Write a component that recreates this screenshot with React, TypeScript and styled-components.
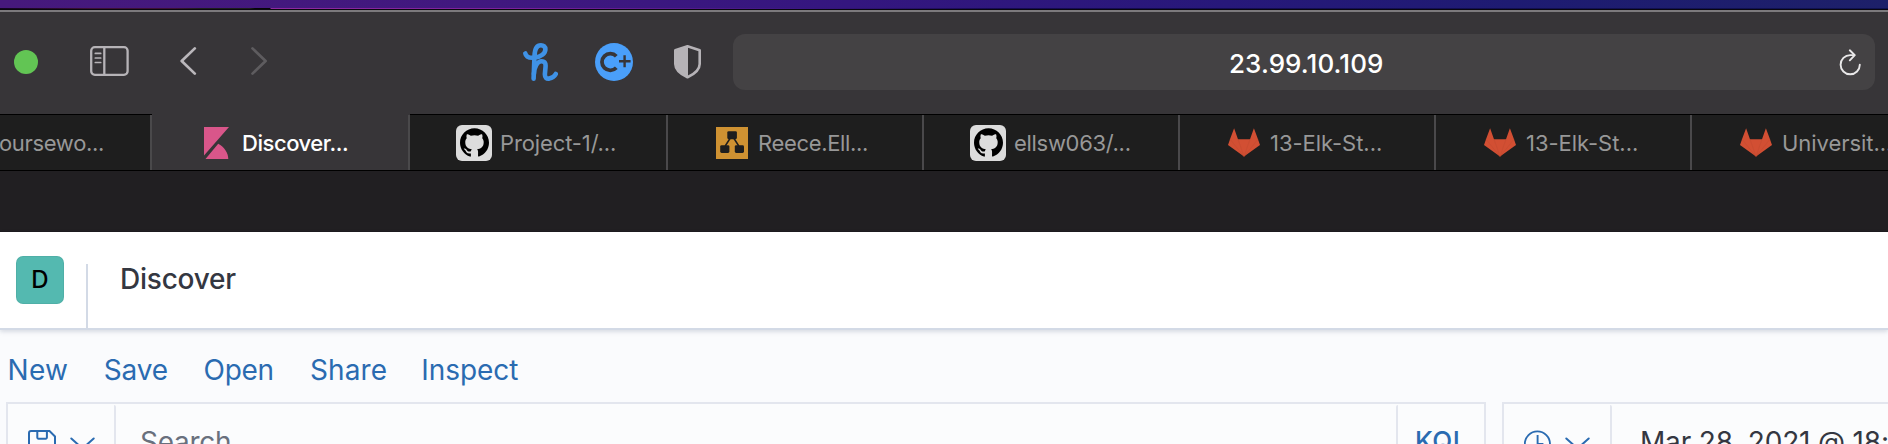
import React from "react";
import styled, { createGlobalStyle } from "styled-components";
import { SiGithub } from "react-icons/si";

const GlobalStyle = createGlobalStyle`
  *, *::before, *::after { box-sizing: border-box; }
  body {
    margin: 0;
    overflow: hidden;
    font-family: Inter, "Liberation Sans", sans-serif;
    background: #fafbfd;
  }
  svg { display: block; flex: none; }
`;

const Screen = styled.div`
  display: flex;
  flex-direction: column;
  width: 1888px;
  height: 444px;
  overflow: hidden;
`;

/* ---------- desktop strip above the window ---------- */

const Desktop = styled.div`
  flex: none;
  height: 10px;
  display: flex;
  flex-direction: column;
  background: linear-gradient(90deg, #46197c 0%, #41187f 25%, #34167f 45%, #27187a 65%, #1e1b72 80%, #1d2069 100%);
`;

const DesktopEdge = styled.div`
  margin-top: 8px;
  height: 1px;
  background: linear-gradient(90deg, #10051f 0, #3c1035 90px, #3c1035 175px, #1d1d1d 200px, #1d1d1d 250px, #050505 255px, #050505 270px, #8e2aa0 271px, #79209c 520px, #3a1682 800px, #150a50 1000px, #0f1250 100%);
`;

const DesktopShadow = styled.div`
  height: 1px;
  background: #09060f;
`;

/* ---------- browser toolbar ---------- */

const Toolbar = styled.header`
  flex: none;
  height: 104px;
  display: flex;
  align-items: flex-start;
  border-top: 2px solid #7c7a7d;
  background: #373538;
`;

const WindowControls = styled.div`
  width: 90px;
  padding: 38px 0 0 14px;
`;

const ZoomLight = styled.div`
  width: 24px;
  height: 24px;
  border-radius: 50%;
  background: #62c554;
`;

const Navigation = styled.nav`
  width: 432px;
  padding-top: 34px;
  display: flex;
  align-items: flex-start;
`;

const NavGlyph = styled.span<{ $before?: number }>`
  margin-left: ${(p) => p.$before ?? 0}px;
`;

const Extensions = styled.div`
  width: 211px;
  padding-top: 29px;
  display: grid;
  grid-template-columns: 73px 79px auto;
`;

const AddressBar = styled.div`
  width: 1142px;
  height: 56px;
  margin-top: 22px;
  padding-right: 11px;
  display: flex;
  align-items: center;
  border-radius: 12px;
  background: #444244;
`;

const Address = styled.span`
  flex: 1;
  padding: 3px 0 0 496px;
  font-size: 26px;
  font-weight: 500;
  line-height: 32px;
  letter-spacing: 0.08px;
  color: #fff;
`;

/* ---------- tabs ---------- */

const TabStrip = styled.div`
  flex: none;
  height: 57px;
  display: flex;
  border-bottom: 1px solid #000;
  background: #1e1e1e;
`;

const Tab = styled.div<{ $width: number; $active?: boolean; $pad: number }>`
  flex: none;
  width: ${(p) => p.$width}px;
  display: flex;
  align-items: center;
  padding-left: ${(p) => p.$pad}px;
  border-top: 1px solid ${(p) => (p.$active ? "#373538" : "#000")};
  background: ${(p) => (p.$active ? "#373538" : "#1e1e1e")};
  box-shadow: inset -2px 0 0 #4a494b;
`;

const TabIcon = styled.span`
  width: 36px;
  height: 36px;
  display: flex;
  align-items: center;
  justify-content: center;
`;

const GithubTile = styled(TabIcon)`
  border-radius: 6px;
  background: #dcdcdc;
  color: #000;
`;

const TabTitle = styled.span<{ $active?: boolean; $gap: number; $tracking: number }>`
  margin-left: ${(p) => p.$gap}px;
  padding-top: 1px;
  font-size: 22px;
  line-height: 28px;
  white-space: nowrap;
  font-weight: ${(p) => (p.$active ? 500 : 400)};
  letter-spacing: ${(p) => p.$tracking}px;
  color: ${(p) => (p.$active ? "#fff" : "#989898")};
`;

const EmptyBar = styled.div`
  flex: none;
  height: 61px;
  background: #211f22;
  border-bottom: 1px solid #1b191c;
`;

/* ---------- page ---------- */

const PageHeader = styled.div`
  flex: none;
  height: 98px;
  display: flex;
  align-items: flex-start;
  background: #fff;
  border-bottom: 2px solid #d3dae6;
  box-shadow: 0 2px 4px rgba(120, 130, 155, 0.25);
`;

const SpaceAvatar = styled.div`
  width: 48px;
  height: 48px;
  margin: 24px 22px 0 16px;
  border-radius: 7px;
  background: #54b9b0;
  box-shadow: inset 0 0 0 1px rgba(0, 0, 0, 0.05);
  font-size: 24px;
  font-weight: 500;
  line-height: 47px;
  text-align: center;
  color: #000;
`;

const Breadcrumb = styled.div`
  height: 64px;
  margin-top: 32px;
  padding-left: 32px;
  border-left: 2px solid #d3dae6;
  font-size: 28px;
  font-weight: 500;
  line-height: 30px;
  letter-spacing: -0.23px;
  color: #343741;
`;

const MenuBar = styled.nav`
  flex: none;
  height: 72px;
  padding: 23px 0 0 7.6px;
  display: grid;
  grid-template-columns: 96.1px 99.8px 106.5px 111.3px auto;
  color: #2a6bb1;
`;

const MenuLink = styled.a<{ $tracking?: number }>`
  font-size: 28px;
  line-height: 34px;
  letter-spacing: ${(p) => p.$tracking ?? 0}px;
`;

const QueryRow = styled.div`
  flex: none;
  height: 80px;
  padding-left: 6px;
  display: flex;
  gap: 16px;
`;

const Field = styled.div<{ $width: number }>`
  flex: none;
  width: ${(p) => p.$width}px;
  display: flex;
  border: 2px solid #e3e6ee;
  background: #fbfcfd;
`;

const FieldButton = styled.div<{ $width: number; $pad: number }>`
  width: ${(p) => p.$width}px;
  margin-top: 1px;
  padding: 25px 0 0 ${(p) => p.$pad}px;
  display: flex;
  gap: 14px;
  border-right: 2px solid #e3e6ee;
  border-top-right-radius: 2px;
`;

const FieldText = styled.div<{ $color: string; $pad: number; $tracking: number }>`
  flex: 1;
  padding-left: ${(p) => p.$pad}px;
  font-size: 28px;
  line-height: 76px;
  letter-spacing: ${(p) => p.$tracking}px;
  white-space: nowrap;
  color: ${(p) => p.$color};
`;

const LanguageToggle = styled.div`
  width: 88px;
  margin-top: 1px;
  padding-left: 17px;
  border-left: 2px solid #e3e6ee;
  border-top-left-radius: 2px;
  font-size: 26px;
  font-weight: 500;
  line-height: 71px;
  letter-spacing: 0.4px;
  color: #2a6bb1;
`;

/* ---------- drawings ---------- */

const SidebarIcon = () => (
  <svg width="39" height="30" viewBox="0 0 39 30" fill="none" stroke="#b6b3b7">
    <rect x="1.2" y="1.2" width="36.4" height="27.6" rx="3.6" strokeWidth="2.3" />
    <path d="M14.3 1v28" strokeWidth="2.3" />
    <path d="M5.3 7.4h5.4M5.3 12h5.4M5.3 16.5h5.4" strokeWidth="1.7" strokeLinecap="round" />
  </svg>
);

const Arrow = ({ forward }: { forward?: boolean }) => (
  <svg width="17" height="30" viewBox="0 0 17 30" fill="none" stroke={forward ? "#5e5c5f" : "#bab7bb"} strokeWidth="2.7" strokeLinecap="round" strokeLinejoin="round">
    <path d={forward ? "M1.5 2.4 14.6 15 1.5 27.6" : "M14.8 2.4 1.7 15l13.1 12.6"} />
  </svg>
);

const HoneyIcon = () => (
  <svg width="36" height="42" viewBox="0 0 36 42" fill="none" stroke="#3f92e6" strokeWidth="4.6" strokeLinecap="round" strokeLinejoin="round">
    <path d="M3.3 12.4C4 16 7.4 17.2 12.6 16.7 19 16 23.4 12.5 23.4 8.3 23.4 5.6 21.5 4.2 18.9 4.2 14.8 4.2 12.7 8.5 12.5 15L11.6 37.6" />
    <path d="M11.9 33C12.3 25.5 15.4 20.3 19.6 20.3 23 20.3 23.9 22.7 23.5 26.2L22.9 33C22.7 36.5 24.5 38 27.2 37.6 30.5 37 32.5 35.5 33.8 33" />
  </svg>
);

const CouponIcon = () => (
  <svg width="38" height="42" viewBox="0 0 38 42" fill="none">
    <circle cx="19" cy="21" r="19" fill="#4a9ffa" />
    <g stroke="#373538">
      <path d="M21.3 15.3A8.3 8.3 0 1 0 21.3 26.7" strokeWidth="3.8" />
      <path d="M29.6 14.2v12M24 20.2h11.6" strokeWidth="2.4" />
    </g>
  </svg>
);

const ShieldIcon = () => (
  <svg width="28" height="42" viewBox="0 0 28 42">
    <path d="M13.5 5.3 25.7 9.3V23c0 6-6 10.4-12.2 13.3C7.3 33.4 1.3 29 1.3 23V9.3Z" fill="none" stroke="#b6b3b7" strokeWidth="2.6" strokeLinejoin="round" />
    <path d="M14 5.3 1.5 9.3V23c0 6 6 10.4 12.5 13.3Z" fill="#b6b3b7" />
  </svg>
);

const ReloadIcon = () => (
  <svg width="26" height="30" viewBox="0 0 26 30" fill="none" stroke="#e9e8e9" strokeWidth="1.9" strokeLinecap="round" strokeLinejoin="round">
    <path d="M21.8 17.7A9.6 9.6 0 1 1 12.2 8.1H16.2" />
    <path d="M11.8 3.3 16.8 8.2 11.8 13.3" />
  </svg>
);

const KibanaIcon = () => (
  <svg width="25" height="32" viewBox="0 0 25 32" fill="#d9568a">
    <path d="M0 0h25L0 28.5ZM1.5 32 14.2 16.8c6 3.3 10 8.7 10.1 15.2Z" />
  </svg>
);

const DiagramIcon = () => (
  <svg width="32" height="32" viewBox="0 0 32 32">
    <path d="M0 0h32v32H0z" fill="#cf9232" />
    <g fill="#1e1e1e">
      <rect x="11.3" y="4.2" width="9.6" height="8" rx="1.4" />
      <rect x="4.2" y="18.2" width="9.2" height="7.8" rx="1.4" />
      <rect x="18.8" y="18.2" width="9.2" height="7.8" rx="1.4" />
      <path d="m14 11.5-4.8 7.5M18 11.5l4.8 7.5" stroke="#1e1e1e" strokeWidth="1.5" />
    </g>
  </svg>
);

const GitlabIcon = () => (
  <svg width="32" height="29" viewBox="0 0 32 29">
    <path d="M6.1.3 10 11.2h12L25.9.3 30 11.2l2 5.8L16 28.6 0 17l2-5.8Z" fill="#d24f33" />
    <path d="M10 11.2 16 28.6 22 11.2M2 11.2 16 28.6 30 11.2" fill="none" stroke="#bd482f" strokeWidth=".4" />
  </svg>
);

const SaveIcon = () => (
  <svg width="28" height="28" viewBox="0 0 28 28" fill="none" stroke="#2a6bb1" strokeWidth="2">
    <path d="M3 1h18.5L27 6.5V25a2 2 0 0 1-2 2H3a2 2 0 0 1-2-2V3a2 2 0 0 1 2-2Z" />
    <path d="M9.3 1v6.5a1.2 1.2 0 0 0 1.2 1.2h7.2a1.2 1.2 0 0 0 1.2-1.2V1" />
  </svg>
);

const ClockIcon = () => (
  <svg width="27" height="28" viewBox="0 0 27 28" fill="none" stroke="#2a6bb1" strokeWidth="1.9">
    <circle cx="13.4" cy="14" r="12.6" />
    <path d="M13.6 5v9h5.8" />
  </svg>
);

const ChevronIcon = () => (
  <svg width="25" height="28" viewBox="0 0 25 28" fill="none" stroke="#2a6bb1" strokeWidth="2" strokeLinecap="round" strokeLinejoin="round">
    <path d="M1.3 8.5 12.5 18.5 23.7 8.5" />
  </svg>
);

type TabKind = "kibana" | "github" | "diagram" | "gitlab";

const Favicon = ({ kind }: { kind: TabKind }) => {
  if (kind === "github") return <GithubTile><SiGithub size={29} /></GithubTile>;
  return (
    <TabIcon>
      {kind === "kibana" ? <KibanaIcon /> : kind === "diagram" ? <DiagramIcon /> : <GitlabIcon />}
    </TabIcon>
  );
};

type TabData = { kind?: TabKind; title: string; width: number; pad: number; gap: number; tracking: number; active?: boolean };

const tabs: TabData[] = [
  { title: "oursewo...", width: 152, pad: 0, gap: -1, tracking: -0.33 },
  { kind: "kibana", title: "Discover...", width: 258, pad: 46, gap: 8, tracking: -0.45, active: true },
  { kind: "github", title: "Project-1/...", width: 258, pad: 46, gap: 8, tracking: -0.12 },
  { kind: "diagram", title: "Reece.Ell...", width: 256, pad: 46, gap: 8, tracking: -0.34 },
  { kind: "github", title: "ellsw063/...", width: 256, pad: 46, gap: 8, tracking: -0.3 },
  { kind: "gitlab", title: "13-Elk-St...", width: 256, pad: 46, gap: 8, tracking: -0.04 },
  { kind: "gitlab", title: "13-Elk-St...", width: 256, pad: 46, gap: 8, tracking: -0.04 },
  { kind: "gitlab", title: "Universit...", width: 256, pad: 46, gap: 8, tracking: -0.04 },
];

export default function App() {
  return (
    <Screen>
      <GlobalStyle />
      <Desktop>
        <DesktopEdge />
        <DesktopShadow />
      </Desktop>
      <Toolbar>
        <WindowControls><ZoomLight /></WindowControls>
        <Navigation>
          <NavGlyph><SidebarIcon /></NavGlyph>
          <NavGlyph $before={51}><Arrow /></NavGlyph>
          <NavGlyph $before={54}><Arrow forward /></NavGlyph>
        </Navigation>
        <Extensions>
          <HoneyIcon />
          <CouponIcon />
          <ShieldIcon />
        </Extensions>
        <AddressBar>
          <Address>23.99.10.109</Address>
          <ReloadIcon />
        </AddressBar>
      </Toolbar>
      <TabStrip>
        {tabs.map((tab, i) => (
          <Tab key={i} $width={tab.width} $pad={tab.pad} $active={tab.active}>
            {tab.kind && <Favicon kind={tab.kind} />}
            <TabTitle $active={tab.active} $gap={tab.gap} $tracking={tab.tracking}>{tab.title}</TabTitle>
          </Tab>
        ))}
      </TabStrip>
      <EmptyBar />
      <PageHeader>
        <SpaceAvatar>D</SpaceAvatar>
        <Breadcrumb>Discover</Breadcrumb>
      </PageHeader>
      <MenuBar>
        <MenuLink $tracking={0.2}>New</MenuLink>
        <MenuLink $tracking={-0.16}>Save</MenuLink>
        <MenuLink $tracking={-0.25}>Open</MenuLink>
        <MenuLink $tracking={0.1}>Share</MenuLink>
        <MenuLink $tracking={-0.05}>Inspect</MenuLink>
      </MenuBar>
      <QueryRow>
        <Field $width={1480}>
          <FieldButton $width={108} $pad={20}><SaveIcon /><ChevronIcon /></FieldButton>
          <FieldText $color="#69707d" $pad={24} $tracking={-0.27}>Search</FieldText>
          <LanguageToggle>KQL</LanguageToggle>
        </Field>
        <Field $width={480}>
          <FieldButton $width={108} $pad={20}><ClockIcon /><ChevronIcon /></FieldButton>
          <FieldText $color="#343741" $pad={28} $tracking={-0.17}>Mar 28, 2021 @ 18:</FieldText>
        </Field>
      </QueryRow>
    </Screen>
  );
}
